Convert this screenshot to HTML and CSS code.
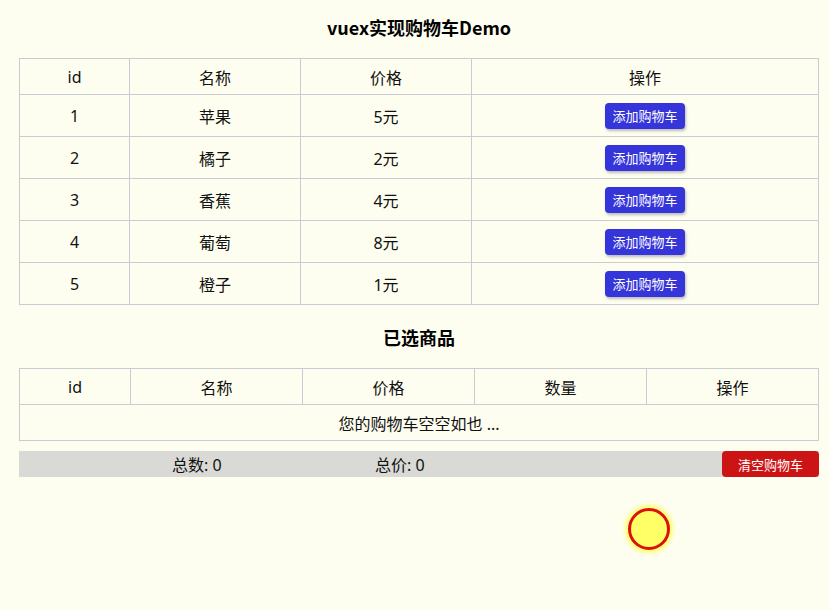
FILE: index.html
```html
<!DOCTYPE html>
<html lang="zh-CN">
<head>
<meta charset="utf-8">
<title>vuex实现购物车Demo</title>
<link rel="stylesheet" href="styles.css">
</head>
<body>
<div class="app">
  <h2 class="title">vuex实现购物车Demo</h2>
  <table class="grid goods">
    <colgroup><col class="c-id"><col class="c-m"><col class="c-m"><col></colgroup>
    <thead><tr><th>id</th><th>名称</th><th>价格</th><th>操作</th></tr></thead>
    <tbody>
      <tr><td>1</td><td>苹果</td><td>5元</td><td><button class="btn add">添加购物车</button></td></tr>
      <tr><td>2</td><td>橘子</td><td>2元</td><td><button class="btn add">添加购物车</button></td></tr>
      <tr><td>3</td><td>香蕉</td><td>4元</td><td><button class="btn add">添加购物车</button></td></tr>
      <tr><td>4</td><td>葡萄</td><td>8元</td><td><button class="btn add">添加购物车</button></td></tr>
      <tr><td>5</td><td>橙子</td><td>1元</td><td><button class="btn add">添加购物车</button></td></tr>
    </tbody>
  </table>

  <h2 class="title sub">已选商品</h2>
  <table class="grid cart">
    <colgroup><col class="c-id2"><col class="c-n"><col class="c-n"><col class="c-n"><col></colgroup>
    <thead><tr><th>id</th><th>名称</th><th>价格</th><th>数量</th><th>操作</th></tr></thead>
    <tbody>
      <tr><td colspan="5">您的购物车空空如也 ...</td></tr>
    </tbody>
  </table>

  <div class="summary">
    <span class="stat">总数: 0</span>
    <span class="stat">总价: 0</span>
    <button class="btn clear">清空购物车</button>
  </div>
</div>
<div class="click-mark"></div>
</body>
</html>
```

FILE: styles.css
```css
html, body {
  margin: 0;
  padding: 0;
}
body {
  background: #fefef0;
  font-family: "Noto Sans", "Noto Sans CJK SC", sans-serif;
  color: #111;
  width: 830px;
  height: 610px;
  overflow: hidden;
  position: relative;
}
.app {
  width: 800px;
  margin-left: 19px;
  padding-top: 14px;
}
.title {
  margin: 0;
  height: 27px;
  line-height: 27px;
  text-align: center;
  font-size: 18px;
  font-weight: 700;
  font-family: "Noto Sans CJK SC", "Noto Sans", sans-serif;
  color: #000;
}
.title.sub {
  margin-top: 19px;
}
.grid {
  width: 800px;
  border-collapse: collapse;
  table-layout: fixed;
  margin-top: 17px;
  font-size: 16px;
}
.grid.cart { margin-top: 17px; }
.grid th, .grid td {
  border: 1px solid #cbcbd2;
  text-align: center;
  font-weight: 400;
  padding: 0;
}
.grid th {
  height: 35px;
}
.goods td {
  height: 41px;
}
.cart td {
  height: 35px;
}
.c-id { width: 110px; }
.c-m { width: 171px; }
.c-id2 { width: 111px; }
.c-n { width: 172px; }
.btn {
  font-family: "Noto Sans CJK SC", sans-serif;
  font-size: 13px;
  color: #fff;
  border: 0;
  border-radius: 4px;
  padding: 0;
  cursor: pointer;
}
.add {
  width: 80px;
  height: 26px;
  background: #3535d9;
  box-shadow: 1px 2px 3px rgba(60, 60, 90, 0.35);
}
.summary {
  margin-top: 10px;
  height: 26px;
  background: #d9d9d6;
  display: flex;
  align-items: center;
  padding-left: 153px;
  font-size: 16px;
}
.stat {
  width: 203px;
}
.clear {
  margin-left: auto;
  width: 97px;
  height: 26px;
  background: #cc1414;
  font-size: 13px;
}
.click-mark {
  position: absolute;
  left: 628px;
  top: 508px;
  width: 36px;
  height: 36px;
  border: 3px solid #dd1010;
  border-radius: 50%;
  background: #ffff66;
  box-shadow: 0 0 0 2px #ffff80, 0 0 4px 3px rgba(255, 255, 100, 0.8);
}
```
